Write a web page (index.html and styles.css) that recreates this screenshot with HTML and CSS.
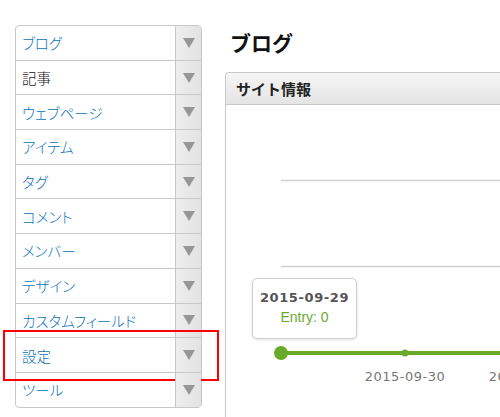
FILE: index.html
```html
<!DOCTYPE html>
<html lang="ja">
<head>
  <meta charset="UTF-8">
  <title>ブログ</title>
  <link rel="stylesheet" href="styles.css">
</head>
<body>

  <div class="page">
    <ul class="menu">
      <li class="menu-item"><a class="menu-link">ブログ</a><span class="menu-toggle"></span></li>
      <li class="menu-item"><a class="menu-link current">記事</a><span class="menu-toggle"></span></li>
      <li class="menu-item"><a class="menu-link">ウェブページ</a><span class="menu-toggle"></span></li>
      <li class="menu-item"><a class="menu-link">アイテム</a><span class="menu-toggle"></span></li>
      <li class="menu-item"><a class="menu-link">タグ</a><span class="menu-toggle"></span></li>
      <li class="menu-item"><a class="menu-link">コメント</a><span class="menu-toggle"></span></li>
      <li class="menu-item"><a class="menu-link">メンバー</a><span class="menu-toggle"></span></li>
      <li class="menu-item"><a class="menu-link">デザイン</a><span class="menu-toggle"></span></li>
      <li class="menu-item"><a class="menu-link">カスタムフィールド</a><span class="menu-toggle"></span></li>
      <li class="menu-item highlight"><a class="menu-link">設定</a><span class="menu-toggle"></span></li>
      <li class="menu-item"><a class="menu-link">ツール</a><span class="menu-toggle"></span></li>
    </ul>

    <div class="main">
      <h1 class="page-title">ブログ</h1>

      <div class="panel">
        <div class="panel-header">サイト情報</div>
        <div class="panel-body">
          <svg class="chart" width="274" height="312" viewBox="0 0 274 312">
            <line x1="55" y1="75.5" x2="274" y2="75.5" stroke="#d0d0d0" stroke-width="1.5"/>
            <line x1="55" y1="161.5" x2="274" y2="161.5" stroke="#d0d0d0" stroke-width="1.5"/>
            <line x1="55" y1="248" x2="274" y2="248" stroke="#6aaa2b" stroke-width="4"/>
            <circle cx="55" cy="248" r="7" fill="#6aaa2b"/>
            <circle cx="179" cy="248" r="3.5" fill="#6aaa2b"/>
            <text class="axis-label" x="179" y="276" text-anchor="middle">2015-09-30</text>
            <text class="axis-label" x="303" y="276" text-anchor="middle">2015-10-01</text>
          </svg>

          <div class="tooltip">
            <div class="tooltip-date">2015-09-29</div>
            <div class="tooltip-value">Entry: 0</div>
          </div>
        </div>
      </div>
    </div>
  </div>

</body>
</html>
```

FILE: styles.css
```css
body {
  margin: 0;
  padding: 0;
  background: #fff;
  font-family: "Noto Sans CJK JP", "Liberation Sans", sans-serif;
  overflow: hidden;
}

.page {
  display: flex;
  align-items: flex-start;
  height: 417px;
}

.menu {
  list-style: none;
  margin: 25px 0 0 15px;
  padding: 0;
  width: 185px;
  border: 1px solid #c8c8c8;
  border-radius: 4px;
  flex-shrink: 0;
}

.menu-item {
  position: relative;
  display: flex;
  height: 33.7px;
  border-top: 1px solid #c8c8c8;
}

.menu-item:first-child {
  border-top: none;
}

.menu-link {
  flex: 1;
  display: flex;
  align-items: center;
  padding-left: 6px;
  font-size: 14.5px;
  font-weight: 300;
  font-feature-settings: "palt";
  color: #0a72bb;
}

.menu-link.current {
  color: #111;
}

.menu-toggle {
  width: 25px;
  border-left: 1px solid #c8c8c8;
  background: linear-gradient(to right, #eeeeee, #e2e2e2);
  display: flex;
  align-items: center;
  justify-content: center;
}

.menu-toggle::after {
  content: "";
  border-left: 6px solid transparent;
  border-right: 6px solid transparent;
  border-top: 10px solid #979797;
}

.highlight::before {
  content: "";
  position: absolute;
  left: -13px;
  right: -18px;
  top: -8px;
  bottom: -9px;
  border: 2px solid #f00;
  pointer-events: none;
}

.main {
  flex: 1;
  margin-left: 23px;
}

.page-title {
  margin: 29px 0 0 5px;
  font-size: 21px;
  font-weight: bold;
  line-height: 26px;
  color: #111;
}

.panel {
  margin-top: 17px;
  border-left: 1px solid #c8c8c8;
  border-top: 1px solid #c8c8c8;
  border-top-left-radius: 4px;
  height: 345px;
}

.panel-header {
  height: 31px;
  line-height: 31px;
  padding-left: 10px;
  font-size: 15px;
  font-weight: bold;
  color: #222;
  background: linear-gradient(to bottom, #f6f6f6, #e4e4e4);
  border-bottom: 1px solid #c8c8c8;
  border-top-left-radius: 4px;
}

.panel-body {
  position: relative;
}

.chart {
  display: block;
}

.axis-label {
  font-family: "DejaVu Sans", sans-serif;
  font-size: 13px;
  letter-spacing: 0.5px;
  fill: #777;
}

.tooltip {
  position: absolute;
  left: 26px;
  top: 173px;
  width: 103px;
  height: 59px;
  border: 1px solid #cfcfcf;
  border-radius: 5px;
  background: #fff;
  box-shadow: 0 1px 3px rgba(0, 0, 0, 0.12);
  text-align: center;
}

.tooltip-date {
  margin-top: 11px;
  font-family: "DejaVu Sans", sans-serif;
  font-size: 13px;
  font-weight: bold;
  letter-spacing: 0.6px;
  color: #555;
}

.tooltip-value {
  margin-top: 4px;
  font-family: "Liberation Sans", sans-serif;
  font-size: 14px;
  color: #6aaa2b;
}
```
